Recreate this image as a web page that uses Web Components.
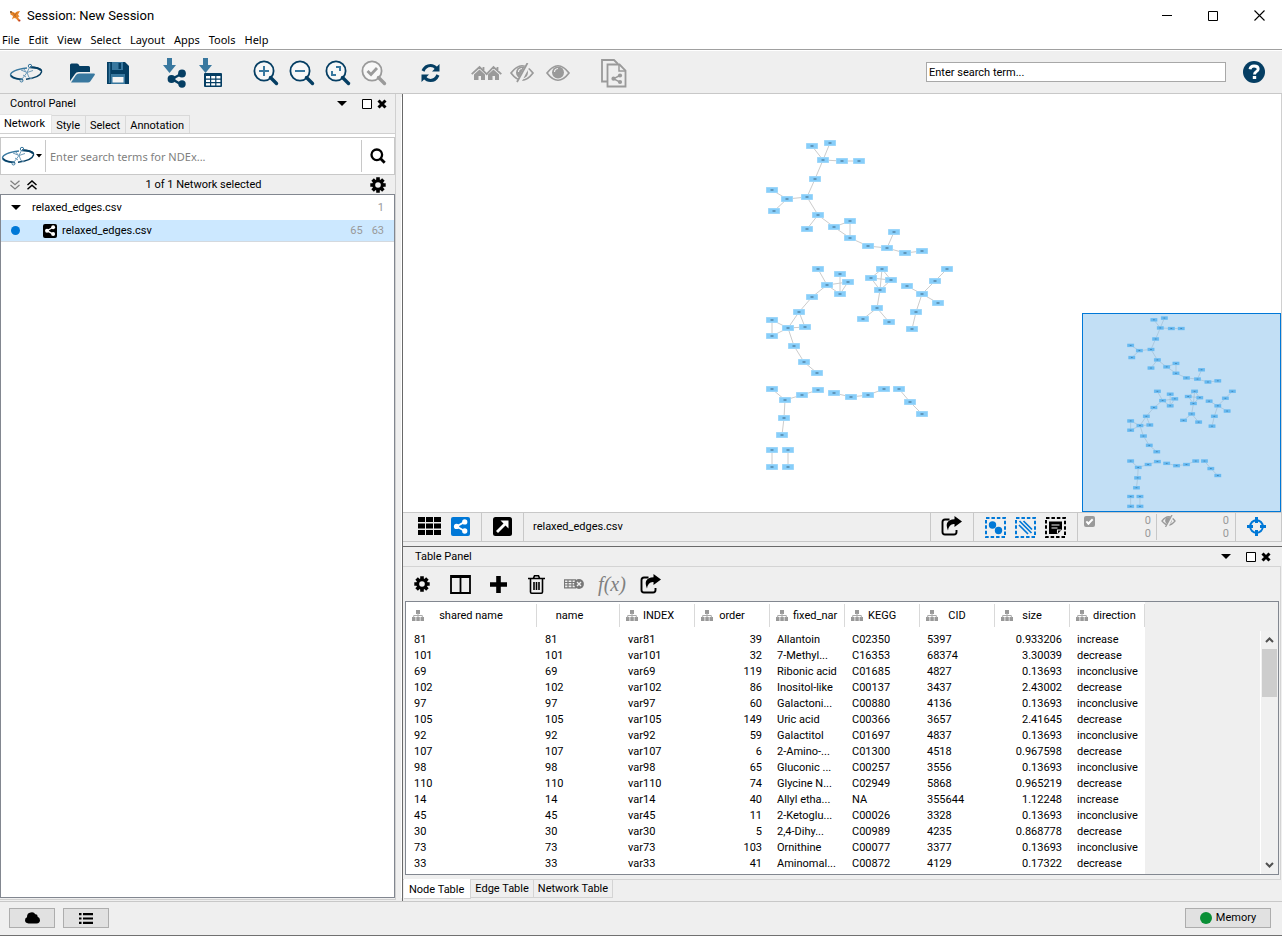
<!DOCTYPE html>
<html lang="en">
<head>
<meta charset="utf-8">
<title>Session: New Session</title>
<style>
html, body { margin: 0; height: 100%; }
body { font: 11px/16px Roboto, "Liberation Sans", sans-serif; color: #000; background: #fff; }
</style>
</head>
<body>
<cy-app></cy-app>
<script>
const BASE = `
*, *::before, *::after { box-sizing: border-box; }
button { font: inherit; color: inherit; background: none; border: 0; padding: 0; margin: 0;
  display: inline-flex; align-items: center; justify-content: center; }
input { font: inherit; color: inherit; margin: 0; border-radius: 0; outline: 0; }
`;
function define(name, html, setup) {
  const template = document.createElement('template');
  template.innerHTML = html.replace('<style>', '<style>' + BASE);
  customElements.define(name, class extends HTMLElement {
    constructor() { super(); this.attachShadow({ mode: 'open' }).append(template.content.cloneNode(true)); }
    connectedCallback() { if (setup) setup(this, this.shadowRoot); }
  });
}

/* ---------- icons: [width, height, markup] ---------- */
const D = '#053e63', M = '#39789f', G = '#9a9a9a', B = '#0078d7';
const lens = (c, inner, ic) => [26, 26, `<circle cx="11" cy="11" r="9.6" fill="#f8f8f8" stroke="${c}" stroke-width="1.8"/><path d="M17.5 17.5l6 6" stroke="${c}" stroke-width="3.4" stroke-linecap="round"/><g fill="none" stroke="${ic}" stroke-width="2">${inner}</g>`];
const eye = c => `<path d="M1 9Q12 -5.500 23 9Q12 23.500 1 9z" fill="none" stroke="${c}" stroke-width="1.7"/><circle cx="12" cy="8.500" r="6" fill="${c}"/><path d="M8.500 8q0-3 3.500-3.500" fill="none" stroke="#efefef" stroke-width="1.200"/>`;
const cog = c => [16, 16, `<g stroke="${c}" stroke-width="3.6"><path d="M8 .3v15.400M.3 8h15.400M2.600 2.600l10.800 10.800M13.400 2.600L2.600 13.400"/></g><circle cx="8" cy="8" r="5.800" fill="${c}"/><circle cx="8" cy="8" r="2.800" fill="#efefef"/>`];
const shareDots = c => `<path d="M14 4.500L5 9.500l9 5" fill="none" stroke="${c}" stroke-width="2"/><circle cx="14" cy="4.500" r="2.900" fill="${c}"/><circle cx="5" cy="9.500" r="2.900" fill="${c}"/><circle cx="14" cy="14.500" r="2.900" fill="${c}"/>`;
const ICONS = {
  cytoscape: [12, 12, `<path d="M1 1l3 1 2 1 2-1.500L11 1 9 4.500l1.500 2L9 7l2 4-1.500.5L7 8.500 5 8 3 9.500 4 6 1.500 4.500z" fill="#e8872a"/><path d="M4 3l3 4M8 2.500l-3 4" stroke="#b5651d" stroke-width=".8"/><circle cx="10.500" cy="10.500" r="1" fill="#c0392b"/><circle cx="2" cy="2" r=".9" fill="#7a5a30"/>`],
  min: [10, 10, `<path d="M0 4.500h10" stroke="#000"/>`],
  max: [10, 10, `<path d="M.5.5h9v9h-9z" fill="none" stroke="#000"/>`],
  close: [11, 11, `<path d="M.5.5l10 10M10.500.5l-10 10" stroke="#000" stroke-width="1.100"/>`],
  ndex: [34, 20, `<g fill="none"><path d="M14 16.500Q1.500 16 1.500 12Q2 7 18 5" stroke="${M}" stroke-width="1.400"/><path d="M14 16.500Q5 16 2 12.500" stroke="${D}" stroke-width="1.500"/><path d="M22 4.200Q33.500 4.500 32.500 9Q31 14.500 17 16.300" stroke="${D}" stroke-width="1.400"/><path d="M21 4.200Q30 4.500 32 7.500" stroke="${D}" stroke-width="2"/><circle cx="21" cy="3" r="1.700" stroke="${M}" stroke-width="1"/><circle cx="12.500" cy="17.500" r="1.500" stroke="${M}" stroke-width="1"/><path d="M20.500 4.500l-2.500 5M12 7l6 2.500 6-2M18 9.500l-3 4-2.500 3M18 9.500l2 5 3 1.500M15 6l2 3M14 12l3 2" stroke="#6f9cba" stroke-width="1"/></g>`],
  open: [27, 20, `<path d="M1 18V2Q1 .5 2.500.5h5.500q1.500 0 2 1.500l.5 1h9q1.500 0 1.500 1.500V9H9.500Q7 9 6 11z" fill="${D}"/><path d="M2 19.500L7 12q1-1.500 3-1.500h15q1.500 0 .7 1.500l-4.500 6.500q-.8 1-2.200 1z" fill="${M}"/>`],
  save: [24, 24, `<path d="M1 1h18l4 4v18H1z" fill="${D}"/><path d="M3.500 2v20" stroke="${M}" stroke-width="1.500"/><path d="M6 1h11v8H6z" fill="${M}"/><path d="M12.500 2h2.500v6h-2.500z" fill="${D}"/><path d="M5 13h14v10H5z" fill="${M}"/><path d="M6.500 16h11v5.500h-11z" fill="#f4f4f4"/>`],
  importNet: [25, 30, `<path d="M5 0h5v7h4l-6.500 8L1 7h4z" fill="${M}"/><path d="M20 15.500L10 21l10 6" fill="none" stroke="${D}" stroke-width="2.500"/><circle cx="20" cy="15.500" r="3.900" fill="${D}"/><circle cx="9.500" cy="21" r="3.900" fill="${D}"/><circle cx="20" cy="26" r="3.700" fill="${D}"/>`],
  importTable: [25, 30, `<path d="M5 0h5v7h4l-6.500 8L1 7h4z" fill="${M}"/><rect x="6" y="15" width="18" height="14" rx="1" fill="${D}"/><path d="M8 18h4v2.500H8zM13.200 18h4v2.500h-4zM18.400 18h4v2.500h-4zM8 21.700h4v2.300H8zM13.200 21.700h4v2.300h-4zM18.400 21.700h4v2.300h-4zM8 25.200h4v2.300H8zM13.200 25.200h4v2.300h-4zM18.400 25.200h4v2.300h-4z" fill="#fff"/>`],
  zoomIn: lens(D, '<path d="M11 6v10M6 11h10"/>', M),
  zoomOut: lens(D, '<path d="M6 11h10"/>', M),
  zoomFit: lens(D, '<path d="M11 7h4v4M11 15H7v-4"/>', M),
  zoomSel: lens(G, '<path d="M6.500 11l3.500 3.500L16 8" stroke-width="2.800"/>', G),
  refresh: [19, 20, `<g fill="none" stroke="${D}" stroke-width="3.200"><path d="M2 8Q4.500 2.500 9.500 2.500Q13 2.500 15.500 5.500"/><path d="M17 12Q14.500 17.500 9.500 17.500Q6 17.500 3.500 14.500"/></g><path d="M18.500 1v7.500H11zM.5 19v-7.500H8z" fill="${D}"/>`],
  houses: [31, 16, `<g fill="${G}"><path d="M3 9.500L8.500 4.500 14 9.500V15h-4v-4H7.500v4H3z"/><path d="M17 9.500l5.500-5L28 9.500V15h-4v-4h-2.500v4H17z"/></g><path d="M.7 9.200L8.500 2l7.200 7.200L22.500 2l7.800 7.200M12.500 2v4M26.500 2v4" fill="none" stroke="${G}" stroke-width="1.800"/>`],
  hide: [25, 20, `<g transform="translate(0 1)">${eye(G)}</g><path d="M19 0L9 19" stroke="#efefef" stroke-width="4.500"/><path d="M17.500 0L7 19" stroke="${G}" stroke-width="1.800"/>`],
  eye: [25, 18, eye(G)],
  docs: [26, 29, `<g fill="#efefef" stroke="${G}" stroke-width="1.800"><path d="M7 22.500H1V1h12l4 4"/><path d="M6.500 5.500h12l6 6v16h-18z"/></g><path d="M18 5v7h7" fill="none" stroke="${G}" stroke-width="1.500"/><path d="M19 16.500l-6.500 3.200 6.500 3.500" fill="none" stroke="${G}" stroke-width="1.500"/><g fill="${G}"><circle cx="19" cy="16.500" r="2.100"/><circle cx="12.500" cy="19.700" r="2.100"/><circle cx="19" cy="23" r="2.100"/></g>`],
  help: [24, 24, `<circle cx="12" cy="12" r="11" fill="${D}"/><path d="M8 9.300Q8.500 6 12 6q4.200 0 4.200 3 0 1.700-2 2.700-1.700.9-1.700 2.800" fill="none" stroke="#fff" stroke-width="2.900"/><path d="M10.800 16h3.400v3h-3.400z" fill="#fff"/>`],
  down: [10, 6, `<path d="M0 0h10L5 5z" fill="#000"/>`],
  downS: [6, 4, `<path d="M0 0h6L3 3.500z" fill="#000"/>`],
  float: [10, 10, `<path d="M.5.5h9v9h-9z" fill="#fff" stroke="#000"/>`],
  x: [10, 10, `<path d="M1.500 1.500l7 7M8.500 1.500l-7 7" stroke="#000" stroke-width="3"/>`],
  search: [16, 16, `<circle cx="6.800" cy="6.800" r="5.300" fill="none" stroke="#000" stroke-width="2.300"/><path d="M10.700 10.700l4 4" stroke="#000" stroke-width="2.800"/>`],
  chevDown: [10, 10, `<path d="M.5.7L5 4.700 9.500.7M.5 5L5 9l4.500-4" fill="none" stroke="#808080" stroke-width="1.300"/>`],
  chevUp: [10, 10, `<path d="M.5 5L5 1l4.500 4M.5 9.300L5 5.300l4.500 4" fill="none" stroke="#000" stroke-width="1.500"/>`],
  cog: cog('#000'),
  dot: [9, 9, `<circle cx="4.500" cy="4.500" r="4.500" fill="${B}"/>`],
  netBlack: [14, 14, `<rect width="14" height="14" rx="2" fill="#000"/><g transform="translate(.6 .2) scale(.68)">${shareDots('#fff')}</g>`],
  grid: [23, 18, `<path d="M0 0h7v5H0zM8 0h7v5H8zM16 0h7v5h-7zM0 6.500h7v5H0zM8 6.500h7v5H8zM16 6.500h7v5h-7zM0 13h7v5H0zM8 13h7v5H8zM16 13h7v5h-7z" fill="#000"/>`],
  netBlue: [19, 19, `<rect width="19" height="19" rx="2" fill="${B}"/><g transform="translate(1 .8) scale(.91)">${shareDots('#fff')}</g>`],
  detach: [19, 19, `<rect width="19" height="19" rx="2.500" fill="#000"/><path d="M4 15l8-8" stroke="#fff" stroke-width="2.800"/><path d="M7.500 3.500h8v8z" fill="#fff"/>`],
  share: [21, 20, `<path d="M8.500 3.500H4Q1.500 3.500 1.500 6v10Q1.500 18.500 4 18.500h9q2.500 0 2.500-2.500v-2" fill="none" stroke="#000" stroke-width="1.900"/><path d="M13.500 0l7.500 5.500-7.500 5.500V8Q8 7.500 7 14.500Q2.500 4 13.500 3.300z" fill="#000"/>`],
  selNodes: [21, 21, `<rect x="1" y="1" width="19" height="19" fill="none" stroke="${B}" stroke-width="2" stroke-dasharray="3.500 1.930"/><circle cx="7.500" cy="8" r="3.700" fill="${B}"/><circle cx="13.500" cy="13.500" r="3.700" fill="${B}"/>`],
  selEdges: [21, 21, `<rect x="1" y="1" width="19" height="19" fill="none" stroke="${B}" stroke-width="2" stroke-dasharray="3.500 1.930"/><path d="M4 8l9 9M4.500 4l12 12M8.500 4l8.500 8.500" stroke="${B}" stroke-width="1.700"/>`],
  selNotes: [21, 21, `<rect x="1" y="1" width="19" height="19" fill="none" stroke="#000" stroke-width="2" stroke-dasharray="3.500 1.930"/><path d="M4 4.500h13v8l-4.500 4.500H4z" fill="#000"/><path d="M6.500 8h8M6.500 11h6M12.500 16.500v-3.500h4" fill="none" stroke="#efefef" stroke-width="1.100"/>`],
  hideS: [15, 12, `<path d="M1 6Q7.500-2.500 14 6Q7.500 14 1 6z" fill="none" stroke="${G}" stroke-width="1.300"/><circle cx="7.500" cy="5.500" r="3.300" fill="${G}"/><path d="M12 0L6 12" stroke="#efefef" stroke-width="2.500"/><path d="M11 0L4.500 12" stroke="${G}" stroke-width="1.300"/>`],
  target: [19, 19, `<circle cx="9.500" cy="9.500" r="6.300" fill="none" stroke="${B}" stroke-width="2"/><path d="M9.500 0v6M9.500 13v6M0 9.500h6M13 9.500h6" stroke="${B}" stroke-width="3"/>`],
  columns: [21, 19, `<path d="M1 1h19v17H1zM10.500 1v17" fill="none" stroke="#000" stroke-width="1.800"/><path d="M1 1.500h19" stroke="#000" stroke-width="3"/>`],
  plus: [17, 17, `<path d="M8.500 0v17M0 8.500h17" stroke="#000" stroke-width="4.600"/>`],
  trash: [17, 19, `<path d="M0 3.500h17M5.500 3l1-2.200h4l1 2.200M2.500 4v13q0 1.200 1.200 1.200h9.600q1.200 0 1.200-1.200V4M6 7v8M8.500 7v8M11 7v8" fill="none" stroke="#000" stroke-width="1.600"/>`],
  tableX: [20, 10, `<path d="M.5.8h11v8H.5zM.5 3.500h11M.5 6h11M4 1v8M8 1v8" fill="none" stroke="#777" stroke-width="1.200"/><circle cx="15" cy="5" r="4.900" fill="#777"/><path d="M13 3l4 4M17 3l-4 4" stroke="#efefef" stroke-width="1.400"/>`],
  tree: [12, 11, `<path d="M4 0h4v4H4zM0 7h3.500v4H0zM4.300 7h3.500v4H4.300zM8.500 7H12v4H8.500z" fill="#999"/><path d="M6 3v4.500M1.700 7.500v-2h8.600v2" fill="none" stroke="#aaa" stroke-width="1"/>`],
  up: [9, 6, `<path d="M1 5l3.500-3.500L8 5" fill="none" stroke="#505050" stroke-width="2"/>`],
  dn: [9, 6, `<path d="M1 1l3.500 3.500L8 1" fill="none" stroke="#505050" stroke-width="2"/>`],
  cloud: [15, 12, `<path d="M3.500 11.500Q0 11 0 8.300 0 6 2 5.300 1.800 1 5.700.5 9-.2 10.300 2.300q2.500-.2 2.300 2.500Q15 5.700 15 8.300q0 3-3.500 3.200z" fill="#000"/>`],
  list: [14, 11, `<path d="M0 1.200h2.500M4 1.200h10M0 5.500h2.500M4 5.500h10M0 9.800h2.500M4 9.800h10" stroke="#000" stroke-width="2.200"/>`],
  memory: [12, 12, `<circle cx="6" cy="6" r="6" fill="#0a8f36"/>`],
};
define('cy-icon', `<style>:host { display: inline-flex; flex: none; } svg { display: block; }</style>`, (el, root) => {
  const [w, h, body] = ICONS[el.getAttribute('name')];
  root.innerHTML += `<svg width="${w}" height="${h}" viewBox="0 0 ${w} ${h}" aria-hidden="true">${body}</svg>`;
});

/* ---------- title bar and menu ---------- */
define('title-bar', `<style>
:host { display: flex; align-items: center; height: 31px; padding-left: 9px; gap: 6px; font-size: 13px; }
h1 { font: inherit; margin: 0; flex: 1; }
button { width: 46px; height: 29px; }
</style>
<cy-icon name="cytoscape"></cy-icon><h1><slot></slot></h1>
<div><button aria-label="Minimize"><cy-icon name="min"></cy-icon></button><button aria-label="Maximize"><cy-icon name="max"></cy-icon></button><button aria-label="Close"><cy-icon name="close"></cy-icon></button></div>`);

define('menu-bar', `<style>
:host { display: flex; gap: 9px; height: 19px; padding: 0 2px; font: 11px/18px "Noto Sans", sans-serif; border-bottom: 1px solid #a0a0a0; margin-bottom: 1px; align-items: flex-start; }
</style>
<button>File</button><button>Edit</button><button>View</button><button>Select</button><button>Layout</button><button>Apps</button><button>Tools</button><button>Help</button>`);

/* ---------- main toolbar ---------- */
define('tool-group', `<style>:host { display: flex; padding-top: 2px; } button { width: 36px; height: 36px; }</style>`, (el, root) => {
  for (const item of el.getAttribute('items').split(' ')) {
    const b = document.createElement('button');
    b.setAttribute('aria-label', item);
    b.innerHTML = `<cy-icon name="${item}"></cy-icon>`;
    root.append(b);
  }
});
define('main-toolbar', `<style>
:host { display: flex; align-items: center; gap: 20px; height: 43px; padding: 0 10px 0 8px; background: #efefef; border-bottom: 1px solid #c8c8c8; }
input { margin-left: auto; width: 300px; height: 20px; border: 1px solid #a8a8a8; padding: 0 2px; background: #fff; }
button { margin-left: -4px; width: 24px; height: 24px; }
.help { margin-right: 6px; }
</style>
<tool-group items="ndex"></tool-group><tool-group items="open save"></tool-group><tool-group items="importNet importTable"></tool-group>
<tool-group items="zoomIn zoomOut zoomFit zoomSel"></tool-group><tool-group items="refresh"></tool-group>
<tool-group items="houses hide eye"></tool-group><tool-group items="docs"></tool-group>
<input type="text" aria-label="Search" value="Enter search term..."><button class="help" aria-label="Help"><cy-icon name="help"></cy-icon></button>`);

/* ---------- panel heading ---------- */
define('panel-heading', `<style>
:host { display: flex; align-items: center; height: 19px; }
h2 { font: inherit; margin: 0; flex: 1; }
button { height: 12px; }
.menu { margin-right: 15px; } .float { margin-right: 5px; }
</style>
<h2><slot></slot></h2><button class="menu" aria-label="Options"><cy-icon name="down"></cy-icon></button><button class="float" aria-label="Float"><cy-icon name="float"></cy-icon></button><button aria-label="Close"><cy-icon name="x"></cy-icon></button>`);

/* ---------- control panel ---------- */
define('control-panel', `<style>
:host { display: flex; flex-direction: column; background: #efefef; border-right: 1px solid #d0d0d0; border-bottom: 1px solid #d0d0d0; }
panel-heading { padding: 0 8px 0 10px; }
nav { display: flex; align-items: flex-end; height: 20px; }
nav button { height: 18px; padding: 2px 5px 0 4px; border: 1px solid #d9d9d9; border-left: 0; border-bottom: 0; }
nav button[aria-selected=true] { height: 20px; padding: 0 6px 2px 4px; background: #fff; border-color: #e4e4e4; margin-bottom: -1px; }
.page { flex: 1; display: flex; flex-direction: column; border-top: 1px solid #d0d0d0; padding-bottom: 1px; }
.ndex { display: flex; align-items: center; height: 38px; margin-top: 3px; background: #fff; border: 1px solid #c8c8c8; box-shadow: 0 -3px #fff; }
.ndex .pick { width: 44px; height: 100%; gap: 1px; justify-content: flex-start; }
.ndex input { flex: 1; min-width: 0; height: 32px; border: solid #c8c8c8; border-width: 0 1px; padding: 0 4px; font: 11px "Noto Sans", sans-serif; background: #fff; }
.ndex input::placeholder { color: #808080; opacity: 1; }
.ndex .go { width: 32px; height: 32px; }
.sel { display: flex; align-items: center; gap: 7px; height: 19px; padding: 0 9px 0 10px; }
.sel span { flex: 1; text-align: center; }
ul { list-style: none; flex: 1; margin: 0; padding: 0; background: #fff; border: 1px solid #828790; }
li { display: flex; align-items: center; height: 25px; padding: 0 10px; }
li span { flex: 1; }
li small { font: inherit; color: #999; margin-left: 9px; }
li.on { height: 22px; background: #cce8ff; border-bottom: 1px solid #d4d9de; }
.parent { gap: 11px; } .on .net { margin: 0 5px 0 23px; }
</style>
<panel-heading>Control Panel</panel-heading>
<nav role="tablist"><button role="tab" aria-selected="true">Network</button><button role="tab">Style</button><button role="tab">Select</button><button role="tab">Annotation</button></nav>
<div class="page">
<div class="ndex"><button class="pick" aria-label="NDEx"><cy-icon name="ndex"></cy-icon><cy-icon name="downS"></cy-icon></button><input type="search" aria-label="NDEx search" placeholder="Enter search terms for NDEx..."><button class="go" aria-label="Search"><cy-icon name="search"></cy-icon></button></div>
<div class="sel"><button aria-label="Expand all"><cy-icon name="chevDown"></cy-icon></button><button aria-label="Collapse all"><cy-icon name="chevUp"></cy-icon></button><span>1 of 1 Network selected</span><button aria-label="Options"><cy-icon name="cog"></cy-icon></button></div>
<ul><li class="parent"><cy-icon name="down"></cy-icon><span>relaxed_edges.csv</span><small>1</small></li>
<li class="on"><cy-icon name="dot"></cy-icon><cy-icon class="net" name="netBlack"></cy-icon><span>relaxed_edges.csv</span><small>65</small><small>63</small></li></ul>
</div>`);

/* ---------- network drawing: node positions on the canvas, edges by index ---------- */
const GROUPS = [
  { n: [[812,146],[830,143],[823,160],[842,161],[859,161],[815,179],[807,197],[787,199],[772,190],[774,211],[818,215],[807,229],[834,227],[850,221],[850,238],[868,246],[887,248],[894,232],[905,253],[922,251]],
    e: '0-2 1-2 2-3 3-4 2-5 5-6 6-7 7-8 7-9 6-10 10-11 10-12 12-13 12-14 13-14 14-15 15-16 16-17 16-18 18-19' },
  { n: [[818,269],[827,285],[840,274],[848,282],[840,294],[812,297],[799,312],[788,328],[805,327],[772,320],[772,336],[794,346],[804,362],[817,373]],
    e: '0-1 1-3 1-4 2-4 3-4 1-5 5-6 6-7 6-8 7-8 7-9 7-10 9-10 7-11 11-12 12-13' },
  { n: [[882,269],[871,278],[891,280],[880,290],[877,308],[863,319],[889,322]], e: '0-1 0-2 0-3 1-2 1-3 2-3 3-4 4-5 4-6' },
  { n: [[947,269],[935,281],[907,286],[922,294],[938,303],[916,312],[912,329]], e: '0-1 1-3 2-3 3-4 3-5 5-6' },
  { n: [[772,389],[785,400],[802,395],[818,390],[784,418],[782,435]], e: '0-1 1-2 2-3 1-4 4-5' },
  { n: [[834,393],[851,397],[868,395],[884,389]], e: '0-1 1-2 2-3' },
  { n: [[899,389],[910,402],[922,414]], e: '0-1 1-2' },
  { n: [[772,450],[772,467],[788,450],[788,467]], e: '0-1 2-3' },
];
define('network-graph', `<style>:host { display: block; } svg { display: block; width: 100%; height: 100%; }</style>`, (el, root) => {
  let edges = '', nodes = '';
  for (const g of GROUPS) {
    for (const pair of g.e.split(' ')) {
      const [a, b] = pair.split('-').map(i => g.n[i]);
      edges += `M${a}L${b}`;
    }
    for (const [x, y] of g.n)
      nodes += `<rect x="${x - 6}" y="${y - 3}" width="12" height="6" fill="#b4e0fb"/><rect x="${x - 5.5}" y="${y - 2.5}" width="11" height="5" fill="#87cefa"/><rect x="${x - 1.5}" y="${y - .7}" width="3" height="1.400" fill="#4f7f9f"/>`;
  }
  root.innerHTML += `<svg viewBox="${el.getAttribute('view')}" role="img" aria-label="Network graph"><path d="${edges}" stroke="#cccccc" stroke-width="1" fill="none"/>${nodes}</svg>`;
});
define('network-view', `<style>
:host { display: flex; flex-direction: column; }
.canvas { position: relative; flex: 1; min-height: 0; background: #fff; border-right: 1px solid #d0d0d0; }
.main { height: 100%; }
.mini { position: absolute; right: 0; bottom: 0; width: 199px; height: 199px; border: 1px solid ${B}; background: #fff; }
.mini::after { content: ""; position: absolute; inset: 0; background: rgba(0,120,215,.24); }
.mini network-graph { height: 100%; }
.bar { display: flex; height: 30px; background: #efefef; border: 1px solid #c8c8c8; border-left: 0; }
.bar > * { display: flex; align-items: center; border-right: 1px solid #c8c8c8; }
.bar > *:last-child { border: 0; }
.views { gap: 10px; padding: 0 11px 2px 15px; }
.det { padding: 0 11px 2px; } .title { flex: 1; padding-left: 9px; }
.exp { padding: 0 11px 2px 10px; } .sels { gap: 9px; padding: 0 11px 0 11px; }
.counts { padding: 0 6px 0 6px; }
.count { display: flex; justify-content: space-between; align-items: flex-start; height: 26px; width: 67px; color: #999; line-height: 13px; text-align: right; }
.count input { width: 11px; height: 11px; margin: 2px 0 0 0; appearance: none; background: ${G}; border-radius: 2px; display: grid; place-items: center; }
.count input::before { content: ""; width: 7px; height: 4px; border: solid #fff; border-width: 0 0 2px 2px; transform: rotate(-45deg); margin-bottom: 2px; }
.count + .count { width: 73px; margin-left: 5px; padding-left: 4px; border-left: 1px solid #c8c8c8; }
.count cy-icon { margin-top: 1px; } .count p { margin: 0; }
.go { padding: 0 15px 2px 11px; }
</style>
<div class="canvas"><network-graph class="main" view="403 94 878 418"></network-graph><div class="mini"><network-graph view="690 136 339 339"></network-graph></div></div>
<div class="bar">
<div class="views"><button aria-label="Grid"><cy-icon name="grid"></cy-icon></button><button aria-label="Network view"><cy-icon name="netBlue"></cy-icon></button></div>
<div class="det"><button aria-label="Detach view"><cy-icon name="detach"></cy-icon></button></div>
<div class="title">relaxed_edges.csv</div>
<div class="exp"><button aria-label="Export"><cy-icon name="share"></cy-icon></button></div>
<div class="sels"><button aria-label="Select nodes"><cy-icon name="selNodes"></cy-icon></button><button aria-label="Select edges"><cy-icon name="selEdges"></cy-icon></button><button aria-label="Select annotations"><cy-icon name="selNotes"></cy-icon></button></div>
<div class="counts"><div class="count"><input type="checkbox" aria-label="Selected" checked><p>0<br>0</p></div><div class="count"><cy-icon name="hideS"></cy-icon><p>0<br>0</p></div></div>
<div class="go"><button aria-label="Navigator"><cy-icon name="target"></cy-icon></button></div>
</div>`);

/* ---------- table panel ---------- */
const COLS = ['shared name', 'name', 'INDEX', 'order', 'fixed_nar', 'KEGG', 'CID', 'size', 'direction'];
const WIDTHS = [131, 83, 75, 75, 75, 75, 75, 75, 75];
const ROWS = `81|39|Allantoin|C02350|5397|0.933206|increase
101|32|7-Methyl...|C16353|68374|3.30039|decrease
69|119|Ribonic acid|C01685|4827|0.13693|inconclusive
102|86|Inositol-like|C00137|3437|2.43002|decrease
97|60|Galactoni...|C00880|4136|0.13693|inconclusive
105|149|Uric acid|C00366|3657|2.41645|decrease
92|59|Galactitol|C01697|4837|0.13693|inconclusive
107|6|2-Amino-...|C01300|4518|0.967598|decrease
98|65|Gluconic ...|C00257|3556|0.13693|inconclusive
110|74|Glycine N...|C02949|5868|0.965219|decrease
14|40|Allyl etha...|NA|355644|1.12248|increase
45|11|2-Ketoglu...|C00026|3328|0.13693|inconclusive
30|5|2,4-Dihy...|C00989|4235|0.868778|decrease
73|103|Ornithine|C00077|3377|0.13693|inconclusive
33|41|Aminomal...|C00872|4129|0.17322|decrease`;
define('data-table', `<style>
:host { display: flex; justify-content: space-between; background: #efefef; border: 1px solid #828790; min-height: 0; overflow: hidden; }
table { border-collapse: collapse; table-layout: fixed; width: 739px; }
.sheet { background: #fff; }
th, td { padding: 0; font-weight: normal; text-align: left; white-space: nowrap; overflow: hidden; }
thead tr { height: 30px; } thead th { vertical-align: top; padding-top: 2px; }
.h { display: flex; align-items: center; height: 23px; padding: 0 6px; border-right: 1px solid #d9d9d9; }
.clip { display: flex; align-items: center; gap: 5px; flex: 1; min-width: 0; }
.clip span { flex: 1; min-width: 0; margin-right: 17px; text-align: center; }
tbody tr { height: 16px; }
tbody td { padding: 0 7px 0 8px; line-height: 16px; }
td.num { text-align: right; }
td:nth-child(n+5) { padding-left: 7px; padding-right: 2px; } td.num:nth-child(n) { padding-right: 8px; }
.scroll { width: 18px; margin-top: 29px; padding-right: 1px; border-left: 1px solid #fff; background: #f0f0f0; display: flex; flex-direction: column; align-items: center; }
.scroll button { width: 16px; height: 18px; }
.thumb { width: 15px; height: 48px; background: #cdcdcd; margin-bottom: auto; }
</style>
<div class="sheet"><table><colgroup></colgroup><thead><tr></tr></thead><tbody></tbody></table></div>
<div class="scroll"><button aria-label="Scroll up"><cy-icon name="up"></cy-icon></button><div class="thumb"></div><button aria-label="Scroll down"><cy-icon name="dn"></cy-icon></button></div>`, (el, root) => {
  root.querySelector('colgroup').innerHTML = WIDTHS.map(w => `<col style="width:${w}px">`).join('');
  root.querySelector('thead tr').innerHTML = COLS.map(c => `<th scope="col"><div class="h"><div class="clip">${c === 'name' ? '' : '<cy-icon name="tree"></cy-icon>'}<span>${c}</span></div></div></th>`).join('');
  root.querySelector('tbody').innerHTML = ROWS.split('\n').map(line => {
    const [id, order, ...rest] = line.split('|');
    return '<tr>' + [id, id, 'var' + id, order, ...rest].map((v, i) => `<td${i === 3 || i === 7 ? ' class="num"' : ''}>${v}</td>`).join('') + '</tr>';
  }).join('');
});
define('table-panel', `<style>
:host { display: flex; flex-direction: column; background: #efefef; border-top: 1px solid #696969; margin-top: 4px; }
panel-heading { padding: 0 11px 0 12px; }
.page { border: 1px solid #d4d4d4; border-left: 0; margin-right: 1px; padding: 0 1px 4px 2px; }
.tools { display: flex; height: 34px; align-items: center; margin-left: -2px; }
.tools button { width: 38px; height: 34px; }
.fx { font: italic 20px "Liberation Serif", serif; color: #808080; }
data-table { height: 274px; }
nav { display: flex; align-items: flex-start; height: 21px; padding-left: 1px; }
nav button { height: 18px; padding: 0 4px; border: 1px solid #d4d4d4; border-width: 0 1px 1px 0; }
nav button[aria-selected=true] { height: 20px; padding: 2px 6px 0 5px; margin-top: -1px; background: #fff; }
</style>
<panel-heading>Table Panel</panel-heading>
<div class="page"><div class="tools"><button aria-label="Settings"><cy-icon name="cog"></cy-icon></button><button aria-label="Columns"><cy-icon name="columns"></cy-icon></button><button aria-label="Add"><cy-icon name="plus"></cy-icon></button><button aria-label="Delete"><cy-icon name="trash"></cy-icon></button><button aria-label="Delete table"><cy-icon name="tableX"></cy-icon></button><button class="fx">f(x)</button><button aria-label="Export"><cy-icon name="share"></cy-icon></button></div>
<data-table></data-table></div>
<nav role="tablist"><button role="tab" aria-selected="true">Node Table</button><button role="tab">Edge Table</button><button role="tab">Network Table</button></nav>`);

/* ---------- status bar ---------- */
define('status-bar', `<style>
:host { display: flex; align-items: center; gap: 8px; height: 36px; box-sizing: border-box; padding: 0 11px 2px 9px; background: #efefef; border-top: 1px solid #c8c8c8; border-bottom: 1px solid #b5b5b5; box-shadow: inset 0 -1px #707070; }
button { width: 46px; height: 20px; background: #e1e1e1; border: 1px solid #adadad; gap: 4px; }
.mem { width: 86px; margin-left: auto; }
</style>
<button aria-label="Cloud"><cy-icon name="cloud"></cy-icon></button><button aria-label="Tasks"><cy-icon name="list"></cy-icon></button><button class="mem"><cy-icon name="memory"></cy-icon>Memory</button>`);

define('cy-app', `<style>
:host { display: flex; flex-direction: column; min-height: 100vh; }
main { flex: 1; display: flex; background: #efefef; }
control-panel { flex: 0 0 396px; margin-bottom: 1px; }
.work { flex: 1; min-width: 0; margin-left: 6px; border-left: 1px solid #696969; display: flex; flex-direction: column; box-shadow: -4px 0 0 -3px #fff; }
network-view { flex: 1; min-height: 300px; }
</style>
<title-bar>Session: New Session</title-bar><menu-bar></menu-bar><main-toolbar></main-toolbar>
<main><control-panel></control-panel><div class="work"><network-view></network-view><table-panel></table-panel></div></main>
<status-bar></status-bar>`);
</script>
</body>
</html>
